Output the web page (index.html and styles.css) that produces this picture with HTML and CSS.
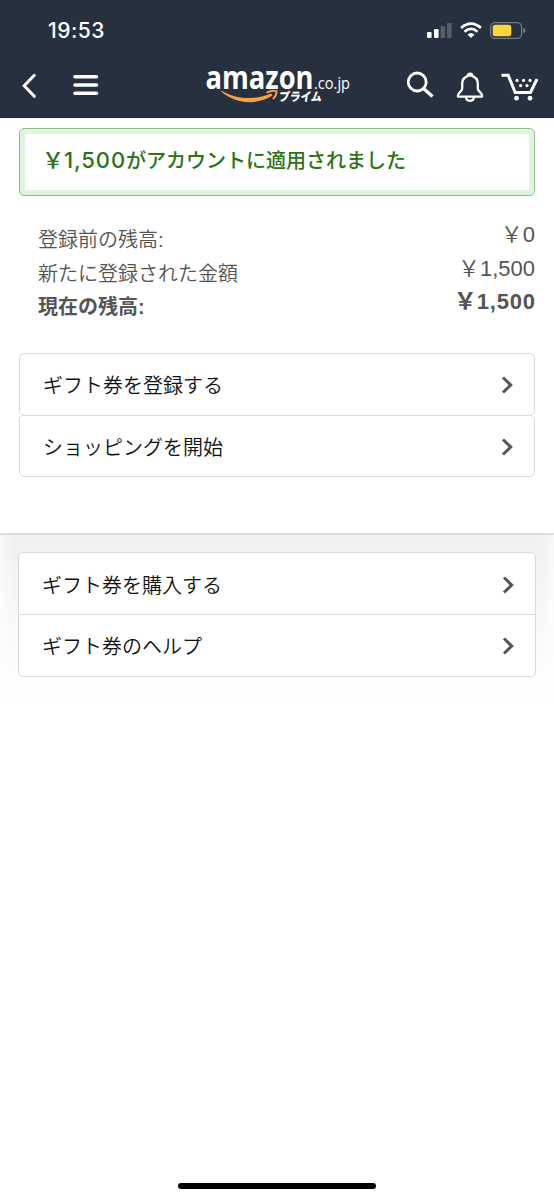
FILE: index.html
```html
<!DOCTYPE html>
<html lang="ja">
<head>
<meta charset="utf-8">
<title>Amazonギフト券</title>
<link rel="stylesheet" href="styles.css">
</head>
<body>
<header class="top">
  <div class="status">
    <span class="time">19:53</span>
    <svg class="signals" width="100" height="20" viewBox="0 0 100 20">
      <g fill="#fff"><rect x="0" y="12" width="4.6" height="6" rx="1"/><rect x="7" y="9" width="4.6" height="9" rx="1"/><g fill="#555d6b"><rect x="13.5" y="6" width="4.6" height="12" rx="1"/><rect x="20" y="3" width="4.6" height="15" rx="1"/></g></g>
      <g fill="none" stroke="#fff" stroke-width="2.7"><path d="M34.1 7.9Q44 -.5 53.9 7.9"/><path d="M37.5 11.8Q44 6.1 50.5 11.8"/></g>
      <path d="M40.4 14.5Q44 11.3 47.6 14.5L44 18Z" fill="#fff"/>
      <rect x="63.6" y="2.6" width="31" height="15.8" rx="4.5" fill="none" stroke="#757c87" stroke-width="1.3"/>
      <rect x="65.7" y="4.7" width="18.6" height="11.6" rx="2.5" fill="#fad53e"/>
      <path d="M96.3 7.7Q98.5 8.2 98.5 10.4T96.3 13.1Z" fill="#757c87"/>
    </svg>
  </div>
  <nav class="nav">
    <svg class="back" width="16" height="26" viewBox="0 0 16 26"><path d="M12.3 2.3L2.2 12.8L12.3 23.3" fill="none" stroke="#fff" stroke-width="3" stroke-linecap="round"/></svg>
    <svg class="menu" width="26" height="22" viewBox="0 0 26 22"><path d="M2 2.8H23.5M2 11H23.5M2 19.2H23.5" stroke="#fff" stroke-width="3.6" stroke-linecap="round"/></svg>
    <svg class="logo" width="150" height="44" viewBox="0 0 150 44">
      <text class="brand" x="0.5" y="25" textLength="108" lengthAdjust="spacingAndGlyphs">amazon</text>
      <text class="domain" x="109" y="24.5" textLength="36" lengthAdjust="spacingAndGlyphs">.co.jp</text>
      <path d="M16 27.5C32 41 52 41 67.5 31.5L66.2 29.5C52 35.5 34 36.5 17 27Q16 26.5 16 27.5Z" fill="#f5a244"/>
      <path d="M61.5 28.6Q67 26 71.5 27.1Q71.8 31.4 67.8 35" fill="none" stroke="#f5a244" stroke-width="2"/>
      <text class="prime" x="74" y="37.5" textLength="43" lengthAdjust="spacingAndGlyphs" transform="skewX(-7) translate(4 0)">プライム</text>
    </svg>
    <svg class="search" width="30" height="30" viewBox="0 0 30 30"><g fill="none" stroke="#fff" stroke-width="2.8"><circle cx="11.2" cy="12" r="9"/><path d="M17.5 18.4L26.5 26.5" stroke-width="3.3"/></g></svg>
    <svg class="bell" width="28" height="32" viewBox="0 0 28 32"><g fill="none" stroke="#fff" stroke-width="2.3" stroke-linejoin="round"><path d="M14 4.1C9 5.5 6.2 8.3 6.2 12.2V17.5C6.2 20.3 2 21.8 2 24.3V25.7H26V24.3C26 21.8 21.8 20.3 21.8 17.5V12.2C21.8 8.3 19 5.5 14 4.1Z"/><path d="M11.8 4.7C11.8 1.9 16.2 1.9 16.2 4.7M10 26C10.2 31 17.8 31 18 26"/></g></svg>
    <svg class="cart" width="40" height="30" viewBox="0 0 40 30"><path d="M.5 3.2H7.2L14.2 20.5H29.5L36 7.2" fill="none" stroke="#fff" stroke-width="3"/><g fill="#fff"><circle cx="15.5" cy="26.2" r="2.4"/><circle cx="29" cy="26.2" r="2.4"/><circle cx="16" cy="8.4" r="1.6"/><circle cx="22.5" cy="8.4" r="1.6"/><circle cx="29" cy="8.4" r="1.6"/><circle cx="19.6" cy="13.6" r="1.6"/><circle cx="26" cy="13.6" r="1.6"/></g></svg>
  </nav>
</header>
<main>
  <section class="alert"><span class="yen">￥</span><span class="num">1,500</span>がアカウントに適用されました</section>
  <section class="balances">
    <div class="row"><span>登録前の残高:</span><span class="amount"><span class="yen">￥</span><span class="num">0</span></span></div>
    <div class="row"><span>新たに登録された金額</span><span class="amount"><span class="yen">￥</span><span class="num">1,500</span></span></div>
    <div class="row total"><span>現在の残高:</span><span class="amount"><span class="yen">￥</span><span class="num">1,500</span></span></div>
  </section>
  <section class="actions">
    <a class="item">ギフト券を登録する<svg class="chevron" viewBox="0 0 12 18"><path d="M2 1.5L9.7 9L2 16.5"/></svg></a>
    <a class="item">ショッピングを開始<svg class="chevron" viewBox="0 0 12 18"><path d="M2 1.5L9.7 9L2 16.5"/></svg></a>
  </section>
</main>
<footer class="more">
  <div class="links">
    <a class="item">ギフト券を購入する<svg class="chevron" viewBox="0 0 12 18"><path d="M2 1.5L9.7 9L2 16.5"/></svg></a>
    <a class="item">ギフト券のヘルプ<svg class="chevron" viewBox="0 0 12 18"><path d="M2 1.5L9.7 9L2 16.5"/></svg></a>
  </div>
</footer>
<div class="home"></div>
</body>
</html>
```
FILE: styles.css
```css
* { box-sizing: border-box; }
body {
  margin: 0;
  height: 1200px;
  display: flex;
  flex-direction: column;
  background: #fff;
  color: #111;
  font: 20px/30px "Liberation Sans", "Noto Sans CJK JP", sans-serif;
  font-weight: 350;
  overflow: hidden;
}
svg { display: block; flex: none; overflow: visible; }
.top { height: 118px; background: #27303f; border-bottom: 1px solid #1d2531; color: #fff; }
.status { height: 60px; padding: 20px 29px 0 48px; display: flex; justify-content: space-between; }
.time { font: 500 21px/22px Inter, sans-serif; letter-spacing: .5px; }
.signals { margin-right: -2px; }
.nav { height: 57px; display: flex; align-items: flex-start; padding-left: 22px; }
.back { margin-top: 13px; }
.menu { margin: 14px 0 0 35px; }
.logo { margin: 4px 0 0 106px; fill: #fff; }
.brand { font: bold 32px "Open Sans", sans-serif; }
.domain { font: 17px "Open Sans", sans-serif; }
.prime { font: 900 12px "Noto Sans CJK JP", sans-serif; }
.search { margin: 10px 0 0 51px; }
.bell { margin: 11px 0 0 20px; }
.cart { margin: 12px 0 0 17px; }
.alert {
  height: 68px;
  margin: 10px 19px 0;
  padding: 16px 0 0 22px;
  border: 1px solid #8fbd8b;
  border-radius: 5px;
  box-shadow: inset 0 0 0 5px #dff4dc;
  color: #2b7416;
  font-weight: 500;
  font-family: "Noto Sans CJK JP", sans-serif;
  white-space: nowrap;
}
.num { font-family: "Liberation Sans", sans-serif; font-size: 22px; line-height: 1; }
.yen { font-family: "Noto Sans CJK JP", sans-serif; font-size: 22px; line-height: 1; }
.alert .num { font-family: Inter, sans-serif; font-size: 22px; font-weight: 500; letter-spacing: .9px; }
.balances { padding: 27px 19px 0 38px; color: #555; }
.row { height: 33.5px; display: flex; justify-content: space-between; line-height: 34px; }
.amount { line-height: 20px; margin-top: -2px; }
.total { font-weight: bold; }
.total .num { letter-spacing: .8px; margin-right: -.8px; }
.total .yen { font-size: 23px; }
.actions { margin: 29px 19px 0; }
.item {
  height: 61px;
  display: flex;
  align-items: center;
  justify-content: space-between;
  padding: 1px 21px 0 23px;
  font-family: "Noto Sans CJK JP", sans-serif;
}
.actions .item { height: 63px; border: 1px solid #d9d9d9; border-radius: 5px; }
.actions .item + .item { height: 62px; margin-top: -1px; padding-top: 2px; }
.chevron { width: 12px; height: 18px; fill: none; stroke: #555; stroke-width: 3; }
.more {
  height: 164px;
  margin-top: 56px;
  padding: 17px 18px 0;
  border-top: 2px solid #ddd;
  background: linear-gradient(90deg, rgba(255,255,255,.55), transparent 14px calc(100% - 14px), rgba(255,255,255,.55)), linear-gradient(#f0f0f0, #fff);
}
.links { background: #fff; border: 1px solid #d9d9d9; border-radius: 5px; }
.links .item { padding-top: 3px; }
.links .item + .item { height: 62px; padding-top: 1px; border-top: 1px solid #d9d9d9; }
.home { width: 198px; height: 6px; border-radius: 3px; background: #000; margin: auto auto 11px; }
```
